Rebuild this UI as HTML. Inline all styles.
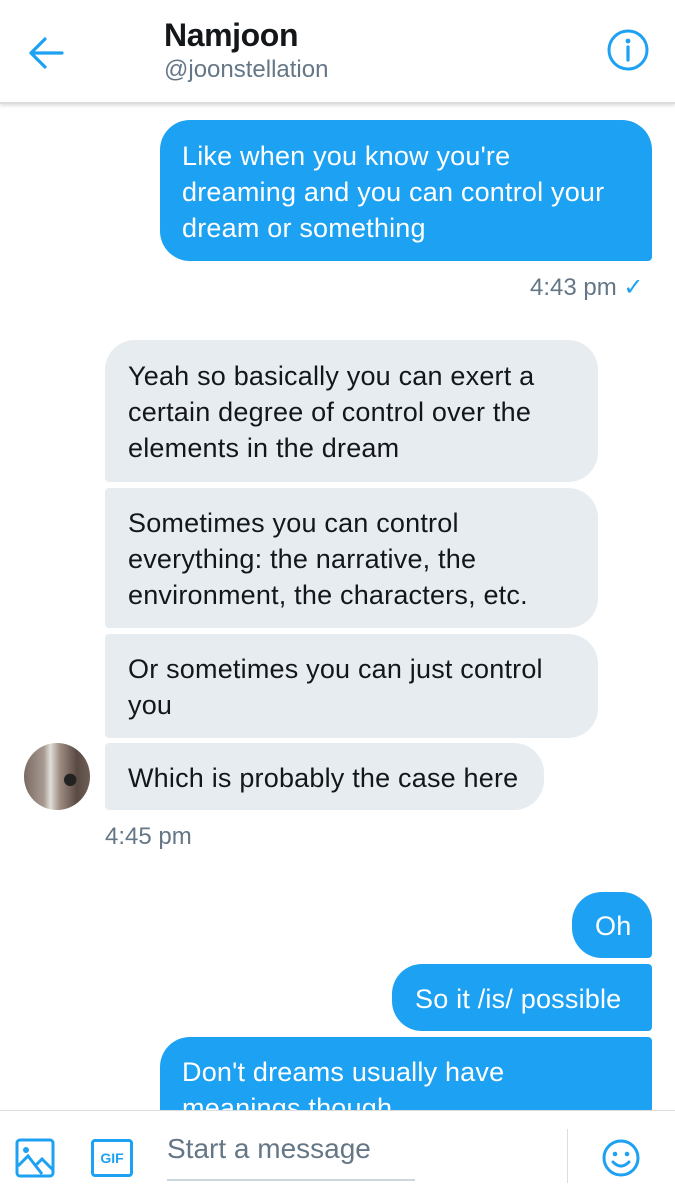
<!DOCTYPE html>
<html><head><meta charset="utf-8"><style>
*{margin:0;padding:0;box-sizing:border-box}
body{width:675px;height:1200px;background:#fff;position:relative;overflow:hidden;font-family:"Liberation Sans",Arial,sans-serif}
.a{position:absolute}
.hdr{left:0;top:0;width:675px;height:104px;background:#fff;border-bottom:2px solid #ddd;box-shadow:0 2px 3px rgba(0,0,0,.12);z-index:2}
.s{background:#1da1f2;color:#fff;border-radius:30px 30px 4px 30px}
.r{background:#e6ecf0;color:#14171a;border-radius:4px 30px 30px 4px}
.t{position:absolute;white-space:nowrap;font-size:27px;line-height:36px;letter-spacing:0.2px}
.ts{font-size:24px;color:#657786}
</style></head><body>
<div class="a hdr">
<svg class="a" style="left:26px;top:34px" width="40" height="38" viewBox="0 0 40 38"><path d="M36 19H5M19 5L5 19l14 14" fill="none" stroke="#1da1f2" stroke-width="3.2" stroke-linecap="round" stroke-linejoin="round"/></svg>
<div class="a" style="left:164px;top:17px;font-size:32px;font-weight:bold;color:#14171a;letter-spacing:-0.4px">Namjoon</div>
<div class="a" style="left:164px;top:56px;font-size:24px;color:#657786;letter-spacing:0">@joonstellation</div>
<svg class="a" style="left:606px;top:28px" width="44" height="44" viewBox="0 0 44 44"><circle cx="22" cy="22" r="19" fill="none" stroke="#1da1f2" stroke-width="3"/><circle cx="22" cy="13" r="2.4" fill="#1da1f2"/><path d="M22 19v13" stroke="#1da1f2" stroke-width="3.2" stroke-linecap="round"/></svg>
</div>

<div class="a s" style="left:160px;top:120px;width:492px;height:141px">
<div class="t" style="left:22px;top:18px">Like when you know you're</div>
<div class="t" style="left:22px;top:54px">dreaming and you can control your</div>
<div class="t" style="left:22px;top:90px">dream or something</div>
</div>
<div class="a ts" style="left:530px;top:273px">4:43 pm <span style="color:#1da1f2">✓</span></div>

<div class="a r" style="left:105px;top:340px;width:493px;height:142px;border-radius:30px 30px 30px 4px">
<div class="t" style="left:23px;top:18px">Yeah so basically you can exert a</div>
<div class="t" style="left:23px;top:54px">certain degree of control over the</div>
<div class="t" style="left:23px;top:90px">elements in the dream</div>
</div>
<div class="a r" style="left:105px;top:488px;width:493px;height:140px">
<div class="t" style="left:23px;top:17px">Sometimes you can control</div>
<div class="t" style="left:23px;top:53px">everything: the narrative, the</div>
<div class="t" style="left:23px;top:89px">environment, the characters, etc.</div>
</div>
<div class="a r" style="left:105px;top:634px;width:493px;height:104px">
<div class="t" style="left:23px;top:17px">Or sometimes you can just control</div>
<div class="t" style="left:23px;top:53px">you</div>
</div>
<div class="a" style="left:24px;top:743px;width:66px;height:67px;border-radius:50%;background:radial-gradient(circle at 70% 55%,#222 0 10%,transparent 11%),linear-gradient(90deg,#7a6a62 0,#a89a92 30%,#e0ddd8 40%,#9a8a80 55%,#5a4a44 80%,#6d5e58 100%)"></div>
<div class="a r" style="left:105px;top:743px;width:439px;height:67px">
<div class="t" style="left:23px;top:17px">Which is probably the case here</div>
</div>
<div class="a ts" style="left:105px;top:823px">4:45 pm</div>

<div class="a s" style="left:572px;top:892px;width:80px;height:66px"><div class="t" style="left:23px;top:16px">Oh</div></div>
<div class="a s" style="left:392px;top:964px;width:260px;height:67px;border-radius:30px 4px 4px 30px"><div class="t" style="left:23px;top:17px">So it /is/ possible</div></div>
<div class="a s" style="left:160px;top:1037px;width:492px;height:120px;border-radius:30px 4px 4px 30px">
<div class="t" style="left:22px;top:17px">Don't dreams usually have</div>
<div class="t" style="left:22px;top:53px">meanings though</div>
</div>

<div class="a" style="left:0;top:1110px;width:675px;height:90px;background:#fff;border-top:1px solid #ddd">
<svg class="a" style="left:15px;top:27px" width="40" height="40" viewBox="0 0 40 40"><rect x="2" y="2" width="36" height="36" rx="3" fill="none" stroke="#1da1f2" stroke-width="3"/><circle cx="11" cy="12" r="3" fill="#1da1f2"/><path d="M3 28l10-10 14 18M20 28l7-7 11 11" fill="none" stroke="#1da1f2" stroke-width="3"/></svg>
<div class="a" style="left:91px;top:28px;width:42px;height:38px;border:3px solid #1da1f2;border-radius:4px;color:#1da1f2;font-size:14px;font-weight:bold;text-align:center;line-height:32px">GIF</div>
<div class="a" style="left:167px;top:22px;font-size:28px;color:#657786;letter-spacing:0">Start a message</div>
<div class="a" style="left:167px;top:68px;width:248px;height:2px;background:#ccd6dd"></div>
<div class="a" style="left:567px;top:18px;width:1px;height:54px;background:#ddd"></div>
<svg class="a" style="left:601px;top:27px" width="40" height="40" viewBox="0 0 40 40"><circle cx="20" cy="20" r="17" fill="none" stroke="#1da1f2" stroke-width="3"/><circle cx="14" cy="16" r="2.3" fill="#1da1f2"/><circle cx="26" cy="16" r="2.3" fill="#1da1f2"/><path d="M12 24q8 8 16 0" fill="none" stroke="#1da1f2" stroke-width="3" stroke-linecap="round"/></svg>
</div>
</body></html>
